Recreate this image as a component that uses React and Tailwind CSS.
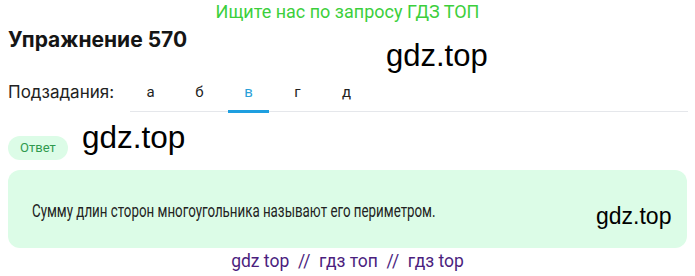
import React from "react";

const tabs = ["а", "б", "в", "г", "д"];

const App = () => {
  return (
    <div className="relative w-[695px] h-[276px] bg-white overflow-hidden font-['Roboto',sans-serif] text-[#111]">
      <div className="pt-[1px] text-center text-[18px] leading-[22px] text-[#3ccf3c]">
        Ищите нас по запросу ГДЗ ТОП
      </div>

      <h2 className="mt-[4px] ml-[8px] text-[21px] leading-[26px] font-bold font-['Inter',sans-serif] text-[#151515]">
        Упражнение 570
      </h2>

      <div className="mt-[29px] flex items-end">
        <span className="ml-[8px] w-[122px] pb-[10px] text-[17px] leading-[20px] font-['Inter',sans-serif] text-[#222]">
          Подзадания:
        </span>
        <div className="flex gap-[8px] flex-1 mr-[7px] border-b border-[#e5e7eb]">
          {tabs.map((t) => (
            <div
              key={t}
              className={
                t === "в"
                  ? "w-[41px] text-center pb-[7px] text-[15px] leading-[20px] text-[#2a9fd8] border-b-[3px] border-[#1e9fe0] -mb-[2px]"
                  : "w-[41px] text-center pb-[9px] text-[15px] leading-[20px] text-[#222]"
              }
            >
              {t}
            </div>
          ))}
        </div>
      </div>

      <div className="mt-[24px] ml-[8px] flex items-center">
        <span className="px-[12px] h-[24px] flex items-center rounded-full bg-[#dcfce7] text-[13px] text-[#2f9a4e]">
          Ответ
        </span>
      </div>

      <div className="mt-[10px] mx-[8px] h-[78px] rounded-[12px] bg-[#dcfce7] flex items-center pl-[24px]">
        <p className="mt-[4px] whitespace-nowrap origin-left scale-x-[0.74] text-[18px] leading-[22px] text-[#222]">
          Сумму длин сторон многоугольника называют его периметром.
        </p>
      </div>

      <div className="mt-[2px] text-center text-[17.5px] leading-[22px] text-[#4b1e7e]">
        gdz top&nbsp; //&nbsp; гдз топ&nbsp; //&nbsp; гдз top
      </div>

      <span className="absolute left-[386px] top-[36px] text-[31px] leading-[40px] font-['Liberation_Sans',sans-serif] text-black">
        gdz.top
      </span>
      <span className="absolute left-[82px] top-[117px] text-[31.5px] leading-[40px] font-['Liberation_Sans',sans-serif] text-black">
        gdz.top
      </span>
      <span className="absolute left-[596px] top-[202px] text-[23px] leading-[28px] font-['Liberation_Sans',sans-serif] text-black">
        gdz.top
      </span>
    </div>
  );
};

export default App;
